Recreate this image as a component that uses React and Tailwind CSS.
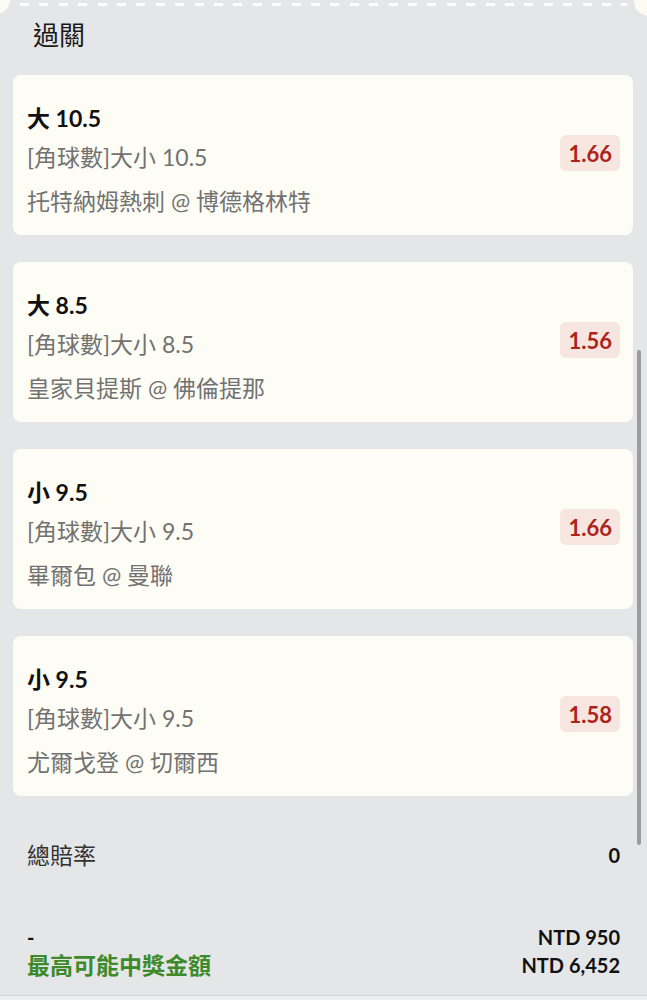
import React from 'react'

const bets = [
  { pick: '大 10.5', market: '[角球數]大小 10.5', match: '托特納姆熱刺 @ 博德格林特', odds: '1.66' },
  { pick: '大 8.5', market: '[角球數]大小 8.5', match: '皇家貝提斯 @ 佛倫提那', odds: '1.56' },
  { pick: '小 9.5', market: '[角球數]大小 9.5', match: '畢爾包 @ 曼聯', odds: '1.66' },
  { pick: '小 9.5', market: '[角球數]大小 9.5', match: '尤爾戈登 @ 切爾西', odds: '1.58' }
]

function BetCard ({ bet }) {
  return (
    <div className="flex items-center justify-between rounded-[8px] bg-[#fefdf5] pl-[14px] pr-[13px] h-[160px]">
      <div className="flex flex-col pt-[29px] pb-[20px]">
        <div className="text-[23px] leading-7 font-bold text-[#111]">{bet.pick}</div>
        <div className="mt-[11px] text-[23px] leading-7 text-[#727272]">{bet.market}</div>
        <div className="mt-[16px] text-[23px] leading-7 text-[#727272]">{bet.match}</div>
      </div>
      <div className="mb-[4px] rounded-[6px] bg-[#f7e6df] px-[8px] h-[36px] flex items-center text-[22px] font-bold text-[#ad231c]">
        {bet.odds}
      </div>
    </div>
  )
}

export default function App () {
  return (
    <div className="relative h-[1000px] w-full overflow-hidden bg-[#e5e6e8] font-['Lato','Noto_Sans_CJK_TC',sans-serif]">
      {/* ticket tear line */}
      <div className="absolute left-[-18px] top-[-14px] h-[28px] w-[28px] rounded-full bg-[#fdfcf3]" />
      <div className="absolute right-[-17px] top-[-14px] h-[30px] w-[30px] rounded-full bg-[#fdfcf3]" />
      <div className="absolute left-[20px] right-[20px] top-[3px] h-[3px] bg-[repeating-linear-gradient(90deg,#ffffff_0_9px,transparent_9px_19.4px)]" />

      {/* scrollbar */}
      <div className="absolute left-[637px] top-[350px] h-[495px] w-[4px] rounded-full bg-[#9c9c9f]" />

      <div className="pt-[17px] pl-[33px] text-[26px] leading-9 text-[#1a1a1a]">過關</div>

      <div className="mt-[22px] ml-[13px] mr-[14px] flex flex-col gap-[27px]">
        {bets.map((b, i) => <BetCard key={i} bet={b} />)}
      </div>

      <div className="mt-[45px] flex items-center justify-between pl-[27px] pr-[27px]">
        <span className="text-[23px] leading-7 text-[#333]">總賠率</span>
        <span className="text-[20px] leading-7 font-bold text-[#111]">0</span>
      </div>

      <div className="mt-[54px] flex justify-between pl-[27px] pr-[27px]">
        <div className="flex flex-col">
          <span className="text-[20px] leading-7 font-bold text-[#111]">-</span>
          <span className="text-[23px] leading-7 font-bold text-[#3d8a2b]">最高可能中獎金額</span>
        </div>
        <div className="flex flex-col items-end">
          <span className="text-[20px] leading-7 font-bold text-[#111]">NTD 950</span>
          <span className="text-[20px] leading-7 font-bold text-[#111]">NTD 6,452</span>
        </div>
      </div>

      <div className="mt-[16px] h-[20px] border-t border-[#d2d3d5] bg-[#ededee]" />
    </div>
  )
}
